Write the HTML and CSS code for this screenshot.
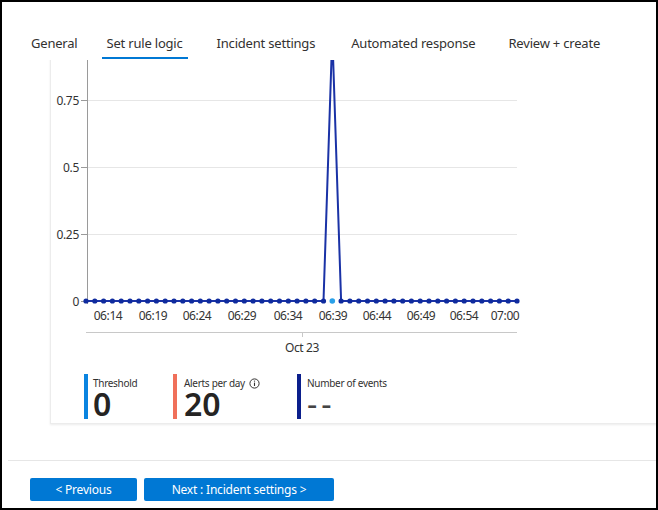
FILE: index.html
```html
<!DOCTYPE html>
<html>
<head>
<meta charset="utf-8">
<link rel="stylesheet" href="styles.css">
</head>
<body>
<div class="frame">
  <nav class="tabs">
    <div class="tab t1">General</div>
    <div class="tab t2 active">Set rule logic</div>
    <div class="tab t3">Incident settings</div>
    <div class="tab t4">Automated response</div>
    <div class="tab t5">Review + create</div>
  </nav>
  <main class="content">
    <section class="card">
      <svg class="chart" width="480" height="330" viewBox="51 30 480 330" xmlns="http://www.w3.org/2000/svg">
        <g class="grid">
          <line x1="87" y1="100.5" x2="517" y2="100.5"/>
          <line x1="87" y1="167.5" x2="517" y2="167.5"/>
          <line x1="87" y1="234.5" x2="517" y2="234.5"/>
        </g>
        <g class="axis">
          <line x1="87.5" y1="30" x2="87.5" y2="304"/>
          <line x1="81" y1="100.5" x2="87" y2="100.5"/>
          <line x1="81" y1="167.5" x2="87" y2="167.5"/>
          <line x1="81" y1="234.5" x2="87" y2="234.5"/>
          <line x1="81" y1="301.5" x2="87" y2="301.5"/>
          <line class="date" x1="86" y1="332.5" x2="517" y2="332.5"/>
          <line class="date" x1="302.5" y1="332" x2="302.5" y2="337"/>
        </g>
        <g class="ylabels">
          <text x="79" y="104.5">0.75</text>
          <text x="79" y="171.5">0.5</text>
          <text x="79" y="238.5">0.25</text>
          <text x="79" y="305.5">0</text>
        </g>
        <g class="xlabels">
          <text x="108" y="319.5">06:14</text>
          <text x="153" y="319.5">06:19</text>
          <text x="197" y="319.5">06:24</text>
          <text x="242" y="319.5">06:29</text>
          <text x="288" y="319.5">06:34</text>
          <text x="333" y="319.5">06:39</text>
          <text x="377" y="319.5">06:44</text>
          <text x="421" y="319.5">06:49</text>
          <text x="464" y="319.5">06:54</text>
          <text x="505" y="319.5">07:00</text>
          <text x="302" y="352">Oct 23</text>
        </g>
        <polyline class="series" points="86,301 323.5,301 332.3,34 341.1,301 517,301"/>
        <g class="dots" id="dots"></g>
        <circle class="hl" cx="332.3" cy="301" r="2.8"/>
      </svg>
      <div class="legend">
        <div class="item">
          <span class="bar blue"></span>
          <div class="meta">
            <div class="label">Threshold</div>
            <div class="value">0</div>
          </div>
        </div>
        <div class="item">
          <span class="bar orange"></span>
          <div class="meta">
            <div class="label">Alerts per day
              <svg class="info" width="11" height="11" viewBox="0 0 11 11"><circle cx="5.5" cy="5.5" r="4.6" fill="none" stroke="#323130" stroke-width="1"/><line x1="5.5" y1="4.6" x2="5.5" y2="8" stroke="#323130" stroke-width="1.1"/><circle cx="5.5" cy="3.1" r="0.7" fill="#323130"/></svg>
            </div>
            <div class="value">20</div>
          </div>
        </div>
        <div class="item">
          <span class="bar navy"></span>
          <div class="meta">
            <div class="label">Number of events</div>
            <div class="value dash">--</div>
          </div>
        </div>
      </div>
    </section>
  </main>
  <footer class="footer">
    <button class="btn prev">&lt; Previous</button>
    <button class="btn next">Next : Incident settings &gt;</button>
  </footer>
</div>
<script>
  var g = document.getElementById('dots');
  var ns = 'http://www.w3.org/2000/svg';
  for (var i = 0; i < 50; i++) {
    if (i === 28) continue;
    var c = document.createElementNS(ns, 'circle');
    c.setAttribute('cx', (86 + i * 431 / 49).toFixed(1));
    c.setAttribute('cy', '301');
    c.setAttribute('r', '2.6');
    g.appendChild(c);
  }
</script>
</body>
</html>
```

FILE: styles.css
```css
* { box-sizing: border-box; }
html, body { margin: 0; padding: 0; background: #fff; }
body { font-family: "Noto Sans", "Open Sans", sans-serif; color: #323130; }

.frame {
  width: 658px;
  height: 510px;
  border: 2px solid #000;
  display: flex;
  flex-direction: column;
  overflow: hidden;
  background: #fff;
}

.tabs {
  height: 58px;
  display: flex;
  align-items: flex-end;
  padding-left: 24px;
  flex: none;
  position: relative;
  z-index: 2;
  background: #fff;
}
.tab {
  font-size: 13px;
  line-height: 16px;
  padding: 0 5px 6px;
  border-bottom: 2px solid transparent;
  margin-bottom: 1px;
  white-space: nowrap;
  letter-spacing: -0.2px;
}
.tab.active { border-bottom-color: #0078d4; }
.t2 { margin-left: 19px; }
.t3 { margin-left: 24px; }
.t4 { margin-left: 26px; }
.t5 { margin-left: 23px; }

.content {
  flex: 1;
  overflow: hidden;
  position: relative;
}
.card {
  margin-top: -31px;
  margin-left: 48px;
  width: 700px;
  border: 1px solid #ececec;
  box-shadow: 0 1px 2px rgba(0,0,0,0.08);
  background: #fff;
}
.chart { display: block; font-family: "Noto Sans", sans-serif; }
.grid line { stroke: #e6e6e6; stroke-width: 1; }
.axis line { stroke: #9a9a9a; stroke-width: 1; }
.axis line.date { stroke: #c8c8c8; }
.ylabels text { font-size: 12px; fill: #333; text-anchor: end; letter-spacing: -0.3px; }
.xlabels text { font-size: 12px; fill: #333; text-anchor: middle; letter-spacing: -0.4px; }
.series { fill: none; stroke: #1a32a6; stroke-width: 2; stroke-linejoin: miter; }
.dots circle { fill: #0f2b9e; }
.hl { fill: #2aa0e8; }

.legend {
  display: grid;
  grid-template-columns: 89px 124px auto;
  padding: 14px 0 4px 33px;
}
.item { display: flex; gap: 5px; }
.item:nth-child(2) { gap: 7px; }
.item:nth-child(3) { gap: 6px; }
.bar { width: 4px; height: 45px; flex: none; }
.bar.blue { background: #0a84e0; }
.bar.orange { background: #f0705a; }
.bar.navy { background: #0b1f8c; }
.label {
  font-size: 10px;
  line-height: 12px;
  margin-top: 3px;
  letter-spacing: -0.3px;
  white-space: nowrap;
  display: flex;
  align-items: center;
}
.info { margin-left: 4px; }
.value {
  font-size: 32px;
  line-height: 30px;
  font-weight: 600;
  color: #252423;
}
.value.dash { font-weight: 400; letter-spacing: 4px; color: #444; }

.footer {
  flex: none;
  height: 48px;
  margin-left: 6px;
  border-top: 1px solid #e6e6e6;
  display: flex;
  align-items: flex-start;
  padding-top: 17px;
  padding-left: 22px;
  gap: 7px;
}
.btn {
  font-family: "Noto Sans", sans-serif;
  font-size: 12px;
  color: #fff;
  background: #0078d4;
  border: none;
  border-radius: 2px;
  height: 23px;
  padding: 0;
  letter-spacing: -0.2px;
}
.btn.prev { width: 107px; }
.btn.next { width: 190px; }
```
